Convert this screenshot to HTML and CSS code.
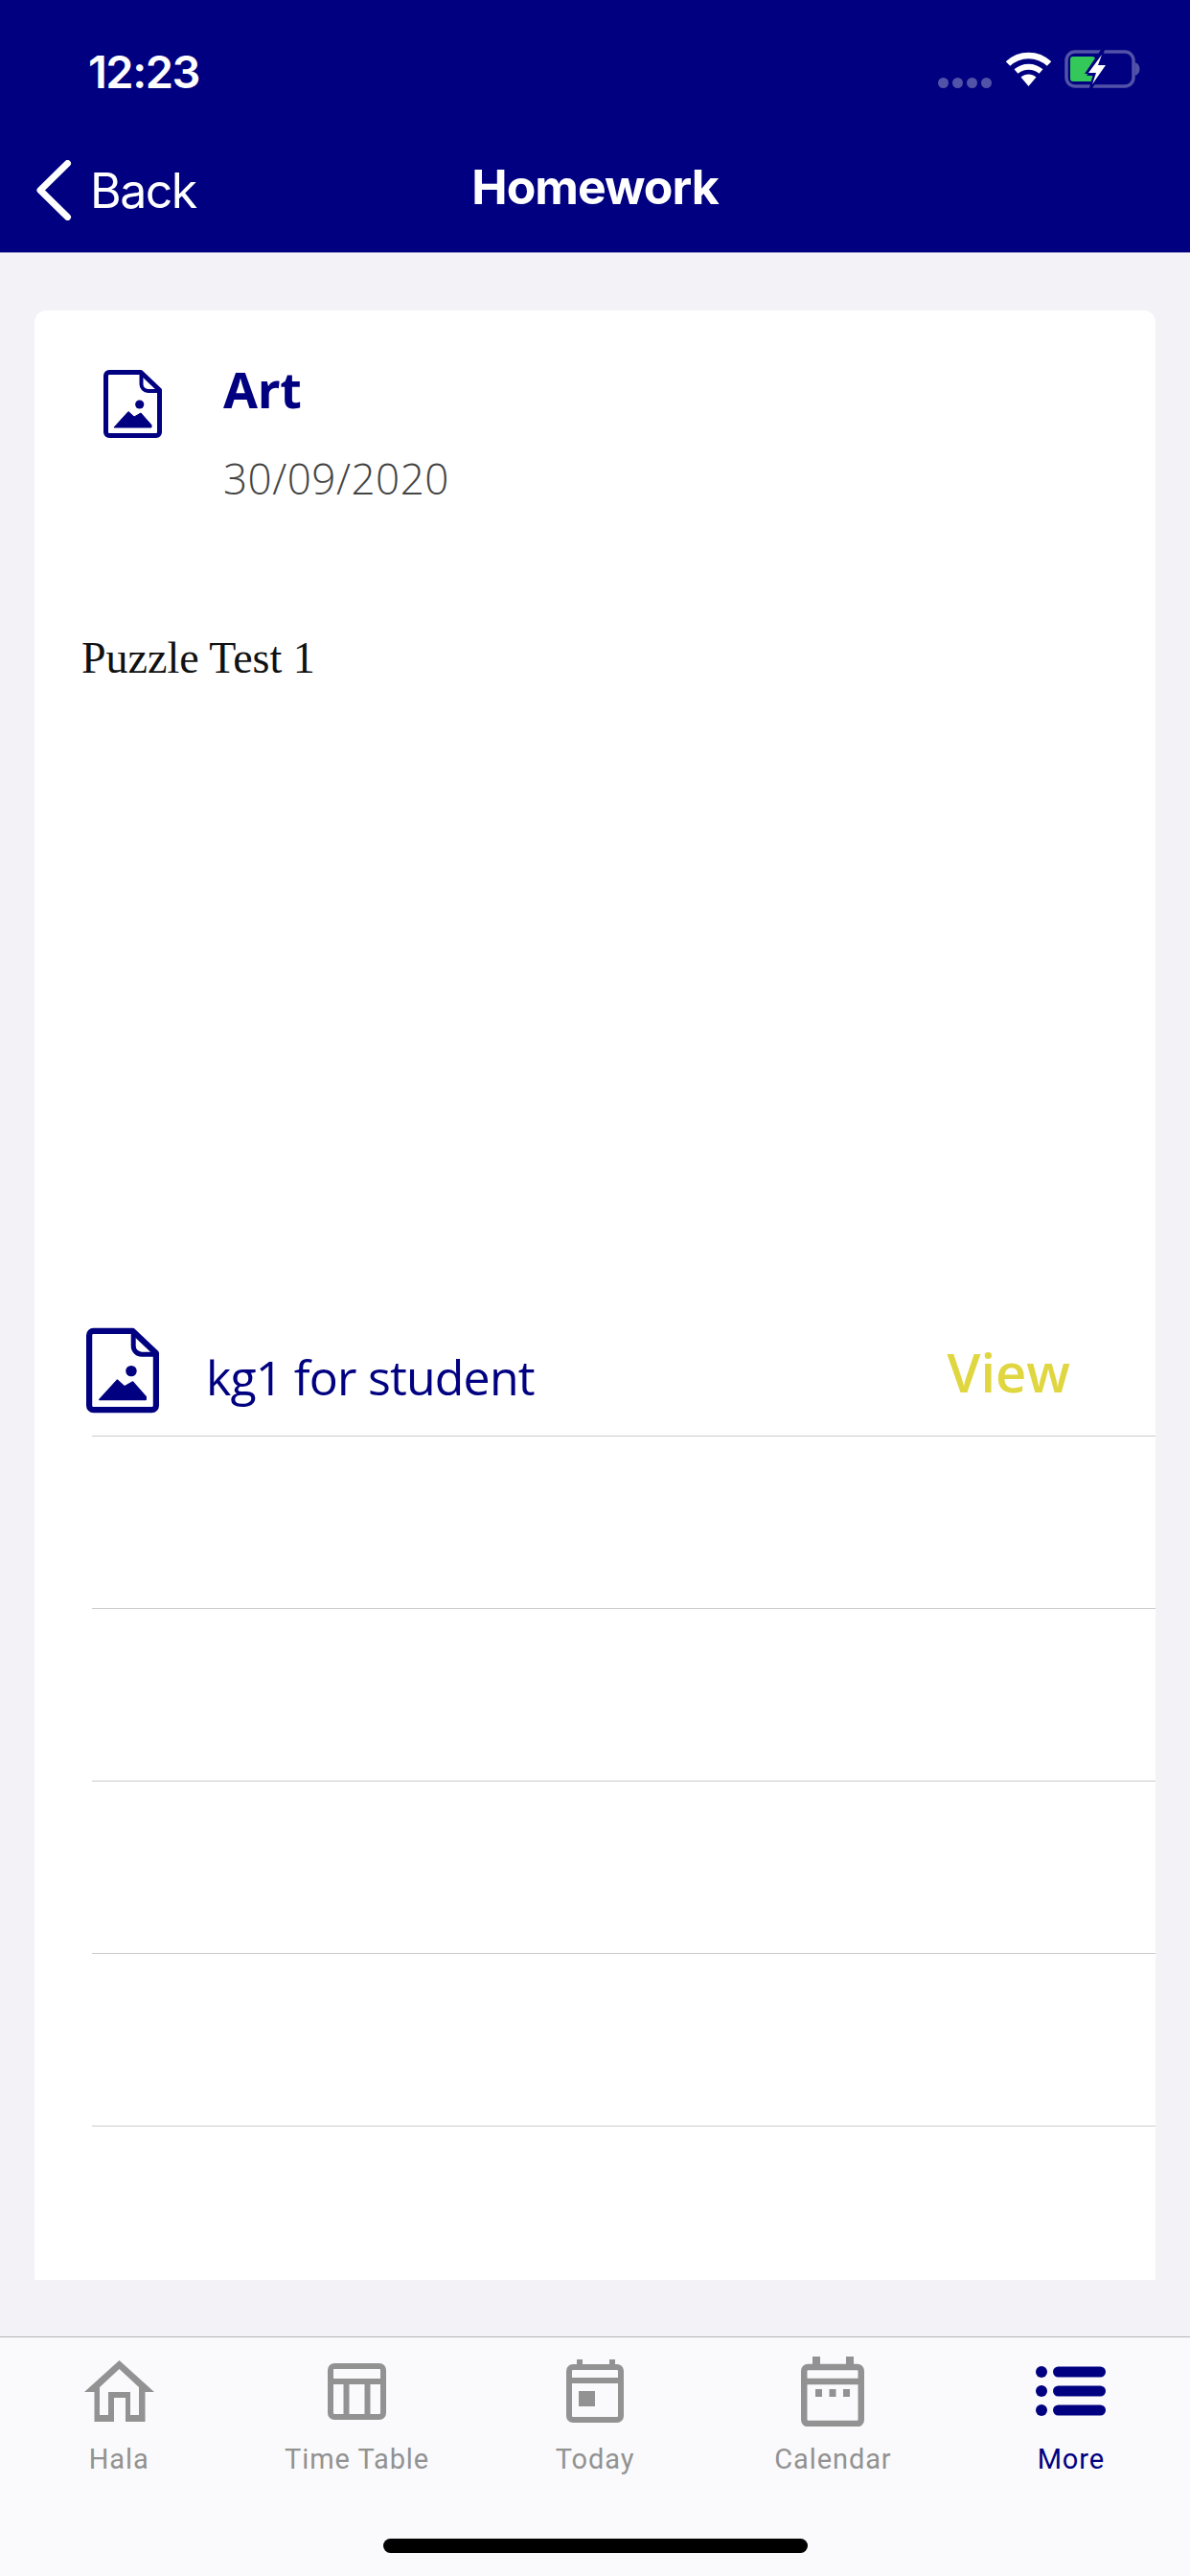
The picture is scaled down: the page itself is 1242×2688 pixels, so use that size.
FILE: index.html
```html
<!DOCTYPE html>
<html lang="en">
<head>
<meta charset="utf-8">
<title>Homework</title>
<link rel="stylesheet" href="styles.css">
</head>
<body>
<svg class="defs" width="0" height="0" aria-hidden="true">
  <symbol id="file-image" viewBox="0 0 61 71">
    <path d="M6 2.5H39L58.5 21V65a3.5 3.5 0 0 1-3.5 3.5H6A3.5 3.5 0 0 1 2.5 65V6A3.5 3.5 0 0 1 6 2.5Z" fill="none" stroke="#000080" stroke-width="5" stroke-linejoin="round"/>
    <path d="M39.5 3V15a7 7 0 0 0 7 7H58" fill="none" stroke="#000080" stroke-width="4"/>
    <circle cx="37.7" cy="36" r="4.6" fill="#000080"/>
    <path d="M11 60L26 43.5L32 49L39 45L50 57.5V60Z" fill="#000080" stroke="#000080" stroke-width="1" stroke-linejoin="round"/>
  </symbol>
</svg>
<div class="app">
  <header class="header">
    <div class="status">
      <span class="time">12:23</span>
      <div class="status-icons">
        <div class="signal"><i></i><i></i><i></i><i></i></div>
        <svg class="wifi" width="47" height="36" viewBox="0 0 47 36">
          <path d="M2 12.5C14 1 33 1 45 12.5" fill="none" stroke="#fff" stroke-width="6.5"/>
          <path d="M10.5 20.5C18 14 29 14 36.5 20.5" fill="none" stroke="#fff" stroke-width="6"/>
          <path d="M15.5 26.5C20 22.5 27 22.5 31.5 26.5L23.5 36Z" fill="#fff"/>
        </svg>
        <svg class="battery" width="80" height="40" viewBox="0 0 80 40">
          <rect x="2" y="2" width="70" height="36" rx="9" fill="none" stroke="#5252a8" stroke-width="3.5"/>
          <path d="M73.5 13c3 1 5 3.500 5 7s-2 6-5 7Z" fill="#5252a8"/>
          <path d="M9 7H29a3 3 0 0 1 3 3V15L23 27H32V33H9a3 3 0 0 1-3-3V10a3 3 0 0 1 3-3Z" fill="#34c759"/>
          <path d="M38 0L21 25H30L26 40H29L46 15H37L42 0Z" fill="#000080"/>
          <path d="M39 5L25 24H33L29 36L43 16H35Z" fill="#fff"/>
        </svg>
      </div>
    </div>
    <nav class="nav">
      <div class="back">
        <svg class="chevron" width="37" height="63" viewBox="0 0 37 63">
          <path d="M33.500 3.500L5 31.500L33.500 59.500" fill="none" stroke="#fff" stroke-width="7" stroke-linecap="round" stroke-linejoin="round" transform="translate(-1 0)"/>
        </svg>
        <span class="back-label">Back</span>
      </div>
      <h1 class="title">Homework</h1>
    </nav>
  </header>

  <main class="main">
    <section class="card">
      <div class="head">
        <svg class="head-icon"><use href="#file-image"/></svg>
        <div class="head-text">
          <div class="subject">Art</div>
          <div class="date">30/09/2020</div>
        </div>
      </div>
      <p class="note">Puzzle Test 1</p>
      <ul class="files">
        <li class="file">
          <svg class="file-icon"><use href="#file-image"/></svg>
          <span class="file-name">kg1 for student</span>
          <span class="view">View</span>
        </li>
        <li class="file"></li>
        <li class="file"></li>
        <li class="file"></li>
        <li class="file"></li>
      </ul>
    </section>
  </main>

  <footer class="tabbar">
    <div class="tabs">
      <div class="tab">
        <div class="tab-icon">
          <svg width="73" height="64" viewBox="0 0 73 64"><path fill="#929292" fill-rule="evenodd" d="M36.500 0L73 33H63.500V64H43V39H31V64H10.500V33H0ZM36.500 9L16 28V57H25V33H48V57H57V28Z"/></svg>
        </div>
        <span class="tab-label">Hala</span>
      </div>
      <div class="tab">
        <div class="tab-icon">
          <svg width="61" height="59" viewBox="0 0 61 59" fill="none" stroke="#929292" stroke-width="6"><rect x="3" y="3" width="55" height="53" rx="4"/><path d="M3 19H58M19.500 19V56M41.500 19V56"/></svg>
        </div>
        <span class="tab-label">Time Table</span>
      </div>
      <div class="tab">
        <div class="tab-icon">
          <svg width="60" height="66" viewBox="0 0 60 66"><g fill="none" stroke="#929292" stroke-width="6"><rect x="3" y="8" width="54" height="55" rx="4"/><path d="M3 22H57"/></g><path fill="#929292" d="M11 0H17V8H11ZM45 0H51V8H45ZM13 33H30V49H13Z"/></svg>
        </div>
        <span class="tab-label">Today</span>
      </div>
      <div class="tab">
        <div class="tab-icon">
          <svg width="66" height="73" viewBox="0 0 66 73"><g fill="none" stroke="#929292" stroke-width="6.500"><rect x="3.250" y="11" width="59.500" height="59" rx="4"/><path d="M3 26H63"/></g><path fill="#929292" d="M12 0H20V10H12ZM47 0H55V10H47ZM15 34H22V42H15ZM29.500 34H36.500V42H29.500ZM44 34H51V42H44Z"/></svg>
        </div>
        <span class="tab-label">Calendar</span>
      </div>
      <div class="tab tab-active">
        <div class="tab-icon">
          <svg width="73" height="52" viewBox="0 0 73 52" fill="#000080"><circle cx="6" cy="6" r="6"/><circle cx="6" cy="26" r="6"/><circle cx="6" cy="46" r="6"/><rect x="18" y="0.500" width="55" height="11" rx="5.500"/><rect x="18" y="20.500" width="55" height="11" rx="5.500"/><rect x="18" y="40.500" width="55" height="11" rx="5.500"/></svg>
        </div>
        <span class="tab-label">More</span>
      </div>
    </div>
    <div class="home-bar"></div>
  </footer>
</div>
</body>
</html>
```
FILE: styles.css
```css
* { box-sizing: border-box; }
html, body { margin: 0; padding: 0; }
body { width: 1242px; height: 2688px; overflow: hidden; background: #f2f2f7; font-family: "Inter", "Liberation Sans", sans-serif; }
.defs { display: block; height: 0; }
.app { display: flex; flex-direction: column; width: 1242px; height: 2688px; }

.header { flex: none; height: 264px; background: #000080; border-bottom: 1px solid #8c8cc4; color: #fff; }
.status { display: flex; justify-content: space-between; align-items: flex-start; height: 163px; padding: 51px 51px 0 92px; }
.time { font: 600 47px/47px "Inter", sans-serif; letter-spacing: -1.5px; }
.status-icons { display: flex; align-items: flex-start; margin-top: 3px; }
.signal { display: flex; gap: 4px; margin: 27px 15px 0 0; }
.signal i { display: block; width: 11px; height: 11px; border-radius: 50%; background: #5252a8; }
.wifi { margin-right: 14px; }
.battery { margin-top: -2px; }

.nav { position: relative; display: flex; justify-content: center; height: 100px; }
.back { position: absolute; left: 38px; top: 4px; display: flex; align-items: center; gap: 19px; }
.chevron { display: block; }
.back-label { font: 400 50px/50px "Inter", sans-serif; letter-spacing: -1.5px; }
.title { margin: 7px 0 0; font: 700 50px/50px "Inter", sans-serif; letter-spacing: -1px; }

.main { flex: 1; display: flex; min-height: 0; padding: 60px 36px 59px; }
.card { flex: 1; display: flex; flex-direction: column; background: #fff; border-radius: 12px 12px 0 0; }
.head { display: flex; height: 280px; padding: 62px 0 0 72px; }
.head-icon { flex: none; width: 61px; height: 71px; margin-right: 64px; }
.head-text { display: flex; flex-direction: column; }
.subject { margin-top: -10px; font: 700 52px/60px "Noto Sans", sans-serif; color: #000080; }
.date { margin-top: 38px; font: 300 44px/50px "Open Sans", sans-serif; color: #444; letter-spacing: 0.5px; }
.note { margin: 57px 0 0 49px; font: 400 46px/52px "Liberation Serif", serif; color: #111; }
.files { list-style: none; margin: auto 0 0; padding: 0 0 160px 60px; }
.file { display: flex; align-items: flex-start; height: 180px; border-bottom: 1.5px solid #cbcbcf; }
.file-icon { flex: none; width: 76px; height: 90px; margin: 66px 0 0 -6px; }
.file-name { margin: 88px 0 0 49px; font: 400 50px/60px "Open Sans", sans-serif; color: #000080; letter-spacing: -0.8px; }
.view { margin: 79px 0 0 auto; padding-right: 89px; font: 600 56px/66px "Open Sans", sans-serif; color: #e0d640; }

.tabbar { flex: none; display: flex; flex-direction: column; height: 250px; background: #fafafc; border-top: 1.5px solid #b4b4b8; }
.tabs { display: flex; height: 210px; }
.tab { flex: 1; display: flex; flex-direction: column; align-items: center; color: #929292; }
.tab-active { color: #000080; }
.tab-icon { display: flex; align-items: center; justify-content: center; height: 74px; margin-top: 19px; }
.tab-label { margin-top: 17px; font: 400 29px/34px "Roboto", sans-serif; letter-spacing: 0.9px; }
.home-bar { width: 443px; height: 15px; margin: 0 auto; border-radius: 8px; background: #000; }
```
